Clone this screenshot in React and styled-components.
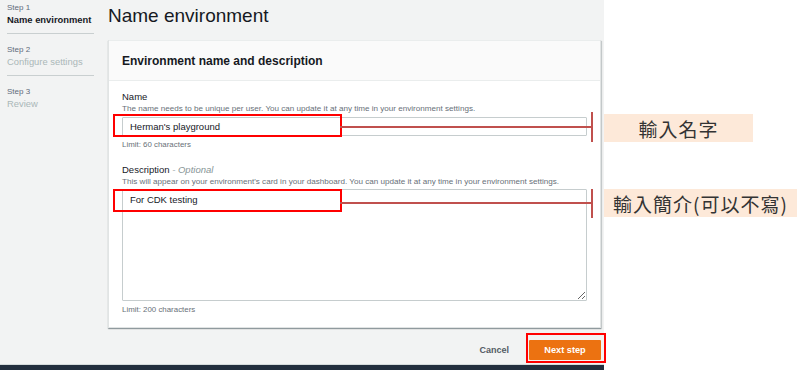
import React from "react";
import styled, { createGlobalStyle } from "styled-components";

const GlobalStyle = createGlobalStyle`
  body {
    margin: 0;
    font-family: "Liberation Sans", Arial, sans-serif;
    background: #ffffff;
  }
`;

const Screen = styled.div`
  position: relative;
  width: 800px;
  height: 370px;
  display: flex;
  overflow: hidden;
`;

const Console = styled.div`
  width: 604px;
  display: flex;
  flex-direction: column;
  background: #f2f3f3;
`;

const Body = styled.div`
  flex: 1;
  display: flex;
  gap: 14px;
  padding: 0 3px 0 7px;
`;

const Sidebar = styled.nav`
  width: 87px;
  flex-shrink: 0;
`;

const StepItem = styled.div`
  padding: 10px 0 7px;
  border-bottom: 1px solid #c9cfd0;

  &:first-child {
    padding-top: 2px;
  }

  &:last-child {
    border-bottom: none;
  }
`;

const StepLabel = styled.div`
  font-size: 8px;
  line-height: 11px;
  color: #5f6b7a;
`;

const StepTitle = styled.div`
  font-size: 9.4px;
  line-height: 13px;
  white-space: nowrap;
  color: ${(p) => (p.$active ? "#16191f" : "#aab7b8")};
  font-weight: ${(p) => (p.$active ? 600 : 400)};
`;

const Main = styled.main`
  flex: 1;
  display: flex;
  flex-direction: column;
`;

const Title = styled.h1`
  margin: 4px 0 12px;
  font-size: 19px;
  line-height: 24px;
  font-weight: 400;
  color: #16191f;
`;

const Card = styled.section`
  background: #ffffff;
  border: 1px solid #e1e4e4;
  border-top: none;
  box-shadow: 0 1px 1px 0 rgba(0, 28, 36, 0.3), 1px 1px 1px 0 rgba(0, 28, 36, 0.15);
`;

const CardHeader = styled.header`
  height: 39px;
  display: flex;
  align-items: center;
  padding: 0 13px;
  background: #fafafa;
  border-top: 1px solid #eaeded;
  border-bottom: 1px solid #eaeded;
  font-size: 12px;
  font-weight: 700;
  color: #16191f;
`;

const CardBody = styled.div`
  padding: 10px 13px 12px;
  display: flex;
  flex-direction: column;
`;

const Field = styled.div`
  display: flex;
  flex-direction: column;
  margin-top: ${(p) => p.$gap || 0}px;
`;

const Label = styled.label`
  font-size: 9.5px;
  line-height: 12px;
  color: #16191f;
`;

const Optional = styled.span`
  font-style: italic;
  color: #879596;
`;

const Hint = styled.div`
  margin-top: 1px;
  font-size: 8.1px;
  line-height: 10px;
  color: #687078;
  white-space: nowrap;
`;

const TextInput = styled.input`
  margin-top: 3px;
  height: 19px;
  box-sizing: border-box;
  padding: 0 7px;
  border: 1px solid #c6cdce;
  border-radius: 1px;
  font-family: inherit;
  font-size: 9.5px;
  color: #16191f;
  outline: none;
`;

const TextArea = styled.textarea`
  margin-top: 2px;
  height: 112px;
  box-sizing: border-box;
  padding: 4px 7px;
  border: 1px solid #c6cdce;
  border-radius: 1px;
  font-family: inherit;
  font-size: 9.5px;
  line-height: 12px;
  color: #16191f;
  resize: vertical;
  outline: none;
`;

const Constraint = styled.div`
  margin-top: 3px;
  font-size: 7.9px;
  line-height: 11px;
  color: #687078;
`;

const Footer = styled.div`
  display: flex;
  justify-content: flex-end;
  align-items: center;
  gap: 20px;
  margin-top: 12px;
`;

const LinkButton = styled.button`
  border: none;
  background: none;
  padding: 0;
  font-family: inherit;
  font-size: 9px;
  font-weight: 700;
  color: #545b64;
`;

const PrimaryButton = styled.button`
  width: 72px;
  height: 20px;
  border: none;
  border-radius: 1px;
  background: #ec7211;
  font-family: inherit;
  font-size: 9.2px;
  font-weight: 700;
  color: #ffffff;
`;

const BottomBar = styled.div`
  height: 5px;
  background: #232f3e;
  border-top: 1px solid #d5dbdb;
`;

const Notes = styled.div`
  flex: 1;
  background: #ffffff;
`;

/* annotation overlay: red highlight boxes, pointer lines, callouts */
const Highlight = styled.div`
  position: absolute;
  box-sizing: border-box;
  border: 2px solid #ff0000;
`;

const Pointer = styled.div`
  position: absolute;
  height: 2px;
  background: #c0504d;

  &::after {
    content: "";
    position: absolute;
    right: 0;
    top: ${(p) => -p.$tick / 2 + 1}px;
    width: 2.5px;
    height: ${(p) => p.$tick}px;
    background: #c0504d;
  }
`;

const Callout = styled.div`
  position: absolute;
  height: 28px;
  box-sizing: border-box;
  display: flex;
  align-items: center;
  justify-content: ${(p) => (p.$center ? "center" : "flex-start")};
  padding: 0 9px;
  background: #fde9d9;
  font-family: "Noto Sans CJK TC", "Noto Sans", sans-serif;
  font-size: 19px;
  letter-spacing: 1px;
  color: #333333;
  white-space: nowrap;
`;

export default function App() {
  return (
    <>
      <GlobalStyle />
      <Screen>
        <Console>
          <Body>
            <Sidebar>
              <StepItem>
                <StepLabel>Step 1</StepLabel>
                <StepTitle $active>Name environment</StepTitle>
              </StepItem>
              <StepItem>
                <StepLabel>Step 2</StepLabel>
                <StepTitle>Configure settings</StepTitle>
              </StepItem>
              <StepItem>
                <StepLabel>Step 3</StepLabel>
                <StepTitle>Review</StepTitle>
              </StepItem>
            </Sidebar>
            <Main>
              <Title>Name environment</Title>
              <Card>
                <CardHeader>Environment name and description</CardHeader>
                <CardBody>
                  <Field>
                    <Label>Name</Label>
                    <Hint>
                      The name needs to be unique per user. You can update it at any time in your environment settings.
                    </Hint>
                    <TextInput readOnly value="Herman's playground" />
                    <Constraint>Limit: 60 characters</Constraint>
                  </Field>
                  <Field $gap={14}>
                    <Label>
                      Description <Optional>- Optional</Optional>
                    </Label>
                    <Hint>
                      This will appear on your environment's card in your dashboard. You can update it at any time in your environment settings.
                    </Hint>
                    <TextArea readOnly value="For CDK testing" />
                    <Constraint>Limit: 200 characters</Constraint>
                  </Field>
                </CardBody>
              </Card>
              <Footer>
                <LinkButton>Cancel</LinkButton>
                <PrimaryButton>Next step</PrimaryButton>
              </Footer>
            </Main>
          </Body>
          <BottomBar />
        </Console>
        <Notes />

        <Highlight style={{ left: 113, top: 114, width: 229, height: 23 }} />
        <Highlight style={{ left: 113, top: 189, width: 229, height: 23 }} />
        <Highlight style={{ left: 526, top: 333, width: 80, height: 30 }} />

        <Pointer $tick={30} style={{ left: 340, top: 126, width: 253 }} />
        <Pointer $tick={29} style={{ left: 340, top: 202, width: 253 }} />

        <Callout $center style={{ left: 604, top: 114, width: 149 }}>
          輸入名字
        </Callout>
        <Callout style={{ left: 604, top: 189, width: 193 }}>
          輸入簡介(可以不寫)
        </Callout>
      </Screen>
    </>
  );
}
